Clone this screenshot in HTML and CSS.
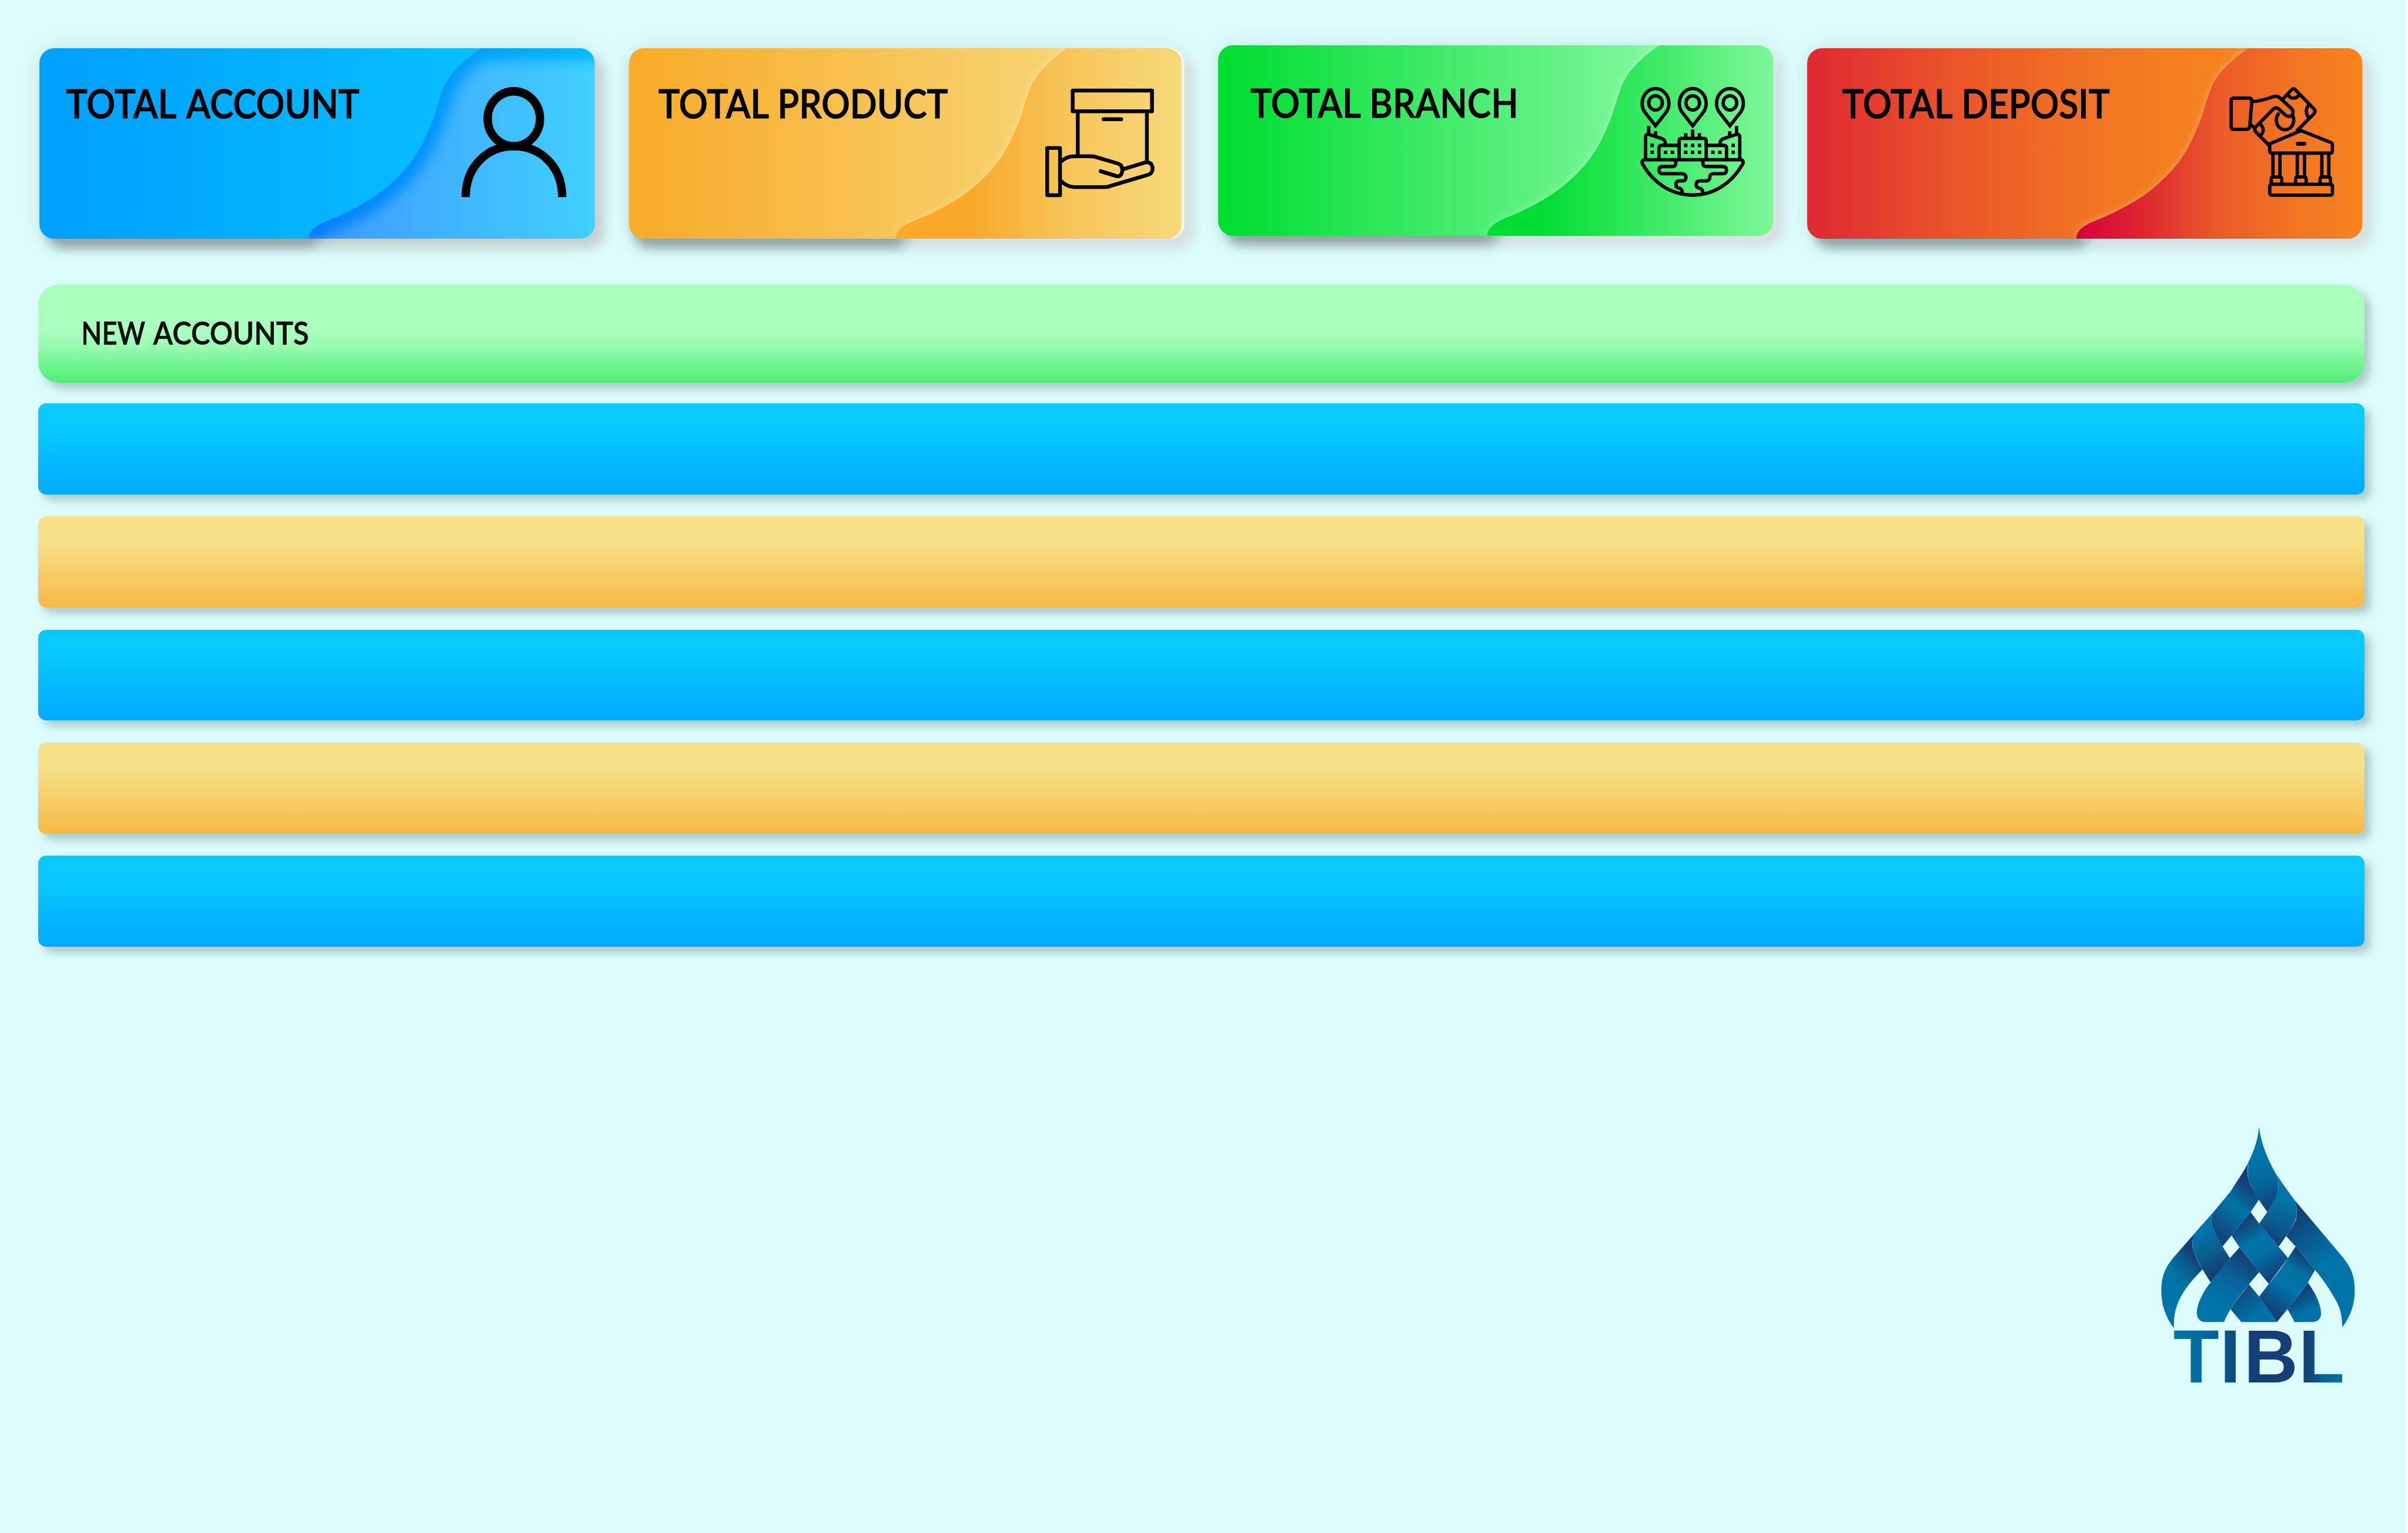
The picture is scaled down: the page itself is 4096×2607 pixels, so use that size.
FILE: index.html
```html
<!DOCTYPE html>
<html lang="en">
<head>
<meta charset="utf-8">
<title>TIBL Dashboard</title>
<link rel="stylesheet" href="styles.css">
</head>
<body>
<svg class="defs" aria-hidden="true">
  <defs>
    <path id="wave" d="M778 0 C742 26 722 48 713 70 C702 98 697 125 686 146 C670 185 650 214 612 246 C588 266 562 280 537 292 C508 306 476 312 475 336.3 H954 A26 26 0 0 0 980 310.300 V26 A26 26 0 0 0 954 0 Z"/>
    <path id="base" d="M26 0 H778 C742 26 722 48 713 70 C702 98 697 125 686 146 C670 185 650 214 612 246 C588 266 562 280 537 292 C508 306 476 312 475 336.3 H26 A26 26 0 0 1 0 310.300 V26 A26 26 0 0 1 26 0 Z"/>
    <clipPath id="waveClip"><use href="#wave"/></clipPath>
    <filter id="soft" x="-20%" y="-40%" width="140%" height="180%"><feGaussianBlur stdDeviation="10"/></filter>
    <filter id="softWide" x="-20%" y="-40%" width="140%" height="180%"><feGaussianBlur stdDeviation="19"/></filter>
    <filter id="glow" x="-20%" y="-40%" width="140%" height="180%"><feGaussianBlur stdDeviation="7"/></filter>
    <filter id="inner" x="-20%" y="-40%" width="140%" height="180%"><feGaussianBlur stdDeviation="11"/></filter>
    <linearGradient id="blueA" gradientUnits="userSpaceOnUse" x1="0" x2="778"><stop offset="0.05" stop-color="#00a0ff"/><stop offset="1" stop-color="#06c0ff"/></linearGradient>
    <linearGradient id="blueB" gradientUnits="userSpaceOnUse" x1="475" x2="980"><stop offset="0" stop-color="#3f98ff"/><stop offset="0.5" stop-color="#40b4ff"/><stop offset="1" stop-color="#40d0ff"/></linearGradient>
    <linearGradient id="blueC" gradientUnits="userSpaceOnUse" x1="475" x2="980"><stop offset="0" stop-color="#007cff"/><stop offset="1" stop-color="#00b8ff"/></linearGradient>
    <linearGradient id="goldA" gradientUnits="userSpaceOnUse" x1="0" x2="778"><stop offset="0.05" stop-color="#f8ac2b"/><stop offset="1" stop-color="#f6d676"/></linearGradient>
    <linearGradient id="goldB" gradientUnits="userSpaceOnUse" x1="475" x2="980"><stop offset="0.25" stop-color="#f9a828"/><stop offset="0.6" stop-color="#f7c559"/><stop offset="1" stop-color="#f6d97b"/></linearGradient>
    <linearGradient id="greenA" gradientUnits="userSpaceOnUse" x1="0" x2="778"><stop offset="0.03" stop-color="#00de33"/><stop offset="1" stop-color="#83f8a0"/></linearGradient>
    <linearGradient id="greenB" gradientUnits="userSpaceOnUse" x1="475" x2="980"><stop offset="0.2" stop-color="#00de33"/><stop offset="1" stop-color="#7ff79a"/></linearGradient>
    <linearGradient id="redA" gradientUnits="userSpaceOnUse" x1="0" x2="778"><stop offset="0.02" stop-color="#df2a32"/><stop offset="0.3" stop-color="#e9512a"/><stop offset="0.6" stop-color="#f07024"/><stop offset="0.8" stop-color="#f47d20"/><stop offset="1" stop-color="#f5851f"/></linearGradient>
    <linearGradient id="redB" gradientUnits="userSpaceOnUse" x1="475" x2="980"><stop offset="0" stop-color="#d6003b"/><stop offset="0.3" stop-color="#e0332f"/><stop offset="0.48" stop-color="#ea5829"/><stop offset="0.75" stop-color="#f27323"/><stop offset="1" stop-color="#f6841f"/></linearGradient>
  </defs>
</svg>

<main class="page">
  <section class="cards">
    <article class="card">
      <svg class="card-art" viewBox="0 0 980 336.300">
        <rect class="ambient" width="980" height="336" rx="26"/>
        <use href="#wave" class="shade-gray" x="17" y="17"/>
        <use href="#base" class="shade-dark" x="14" y="17"/>
        <use href="#base" fill="url(#blueA)"/>
        <use href="#wave" fill="url(#blueB)"/>
        <g clip-path="url(#waveClip)"><path class="inset" stroke="url(#blueC)" d="M1010 0 H778 C742 26 722 48 713 70 C702 98 697 125 686 146 C670 185 650 214 612 246 C588 266 562 280 537 292 C508 306 476 312 475 336"/></g>
        <text class="label" y="123"><tspan x="47" textLength="195" lengthAdjust="spacingAndGlyphs">TOTAL</tspan> <tspan x="259" textLength="306" lengthAdjust="spacingAndGlyphs">ACCOUNT</tspan></text>
        <g class="icon person"><ellipse cx="837.300" cy="124.500" rx="46.200" ry="48.500"/><path d="M752.300 262.700 C752.300 209 790 173 837.500 173 S922.700 209 922.700 262.700"/></g>
      </svg>
    </article>
    <article class="card">
      <svg class="card-art" viewBox="0 0 980 336.300">
        <rect class="ambient" width="980" height="336" rx="26"/>
        <use href="#wave" class="shade-light" x="17" y="17"/>
        <use href="#base" class="shade-dark" x="9" y="17"/>
        <rect x="500" width="480" height="336.300" rx="26" fill="#fdf6e2"/>
        <use href="#base" fill="url(#goldA)"/>
        <use href="#wave" class="halo" x="-5"/>
        <use href="#wave" fill="url(#goldB)" x="-5"/>
        <text class="label" y="123"><tspan x="52" textLength="195" lengthAdjust="spacingAndGlyphs">TOTAL</tspan> <tspan x="262" textLength="301" lengthAdjust="spacingAndGlyphs">PRODUCT</tspan></text>
        <g class="icon" stroke-width="20" transform="translate(720 45) scale(.33333)">
          <path stroke-linejoin="round" d="M189 89 H609 V199 H189 Z M54 393 H122 V643 H54 Z"/>
          <path d="M216 199 V437 M582 199 V468"/>
          <path stroke-linecap="round" d="M353 241 H446"/>
          <path d="M126 467 Q155 437 195 437 H288 Q304 437 318 443 L430 476 Q452 485 452 511 Q448 545 425 543 L337 516"/>
          <path stroke-linecap="round" d="M337 516 L410 539"/>
          <path d="M457 505 L572 470 Q605 463 612 495 Q614 522 595 533 L380 597 Q372 600 360 600 H195 Q155 598 126 566"/>
        </g>
      </svg>
    </article>
    <article class="card card-raised">
      <svg class="card-art" viewBox="0 0 980 336.300">
        <rect class="ambient" width="980" height="336" rx="26"/>
        <use href="#wave" class="shade-light" x="17" y="17"/>
        <use href="#base" class="shade-dark" x="14" y="17"/>
        <use href="#base" fill="url(#greenA)"/>
        <use href="#wave" class="halo"/>
        <use href="#wave" fill="url(#greenB)"/>
        <text class="label" y="128"><tspan x="57" textLength="195" lengthAdjust="spacingAndGlyphs">TOTAL</tspan> <tspan x="267" textLength="263" lengthAdjust="spacingAndGlyphs">BRANCH</tspan></text>
        <g class="icon" stroke-width="18" transform="translate(720 50) scale(.33333)">
          <g id="pin"><path d="M156 276 L103 209 C90 192 85 178 85 158 A71 79 0 0 1 227 158 C227 178 222 192 209 209 Z"/><ellipse cx="156" cy="155" rx="36" ry="38"/></g>
          <use href="#pin" x="197"/>
          <use href="#pin" x="394"/>
          <path d="M120 277 V322 M156 305 V330 M316 315 V342 M353 296 V342 M388 315 V342 M549 305 V330 M585 277 V322"/>
          <path d="M103 455 V338 Q103 318 122 322 L190 344 Q208 350 208 373 M174 455 V395 Q174 380 188 380 H281 M281 455 V355 Q281 343 293 343 H411 Q424 343 424 355 V455 M424 380 H518 Q532 380 532 395 V455 M602 455 V338 Q602 318 584 322 L515 345 Q497 351 497 373 M90 456 H615"/>
          <path d="M97 456 Q80 460 87 478 C145 580 240 643 353 643 C465 643 560 580 618 478 Q625 460 608 456"/>
          <path d="M263 460 V475 Q263 492 245 492 H195 Q174 492 174 511 Q174 530 195 530 H295 Q317 530 317 550 Q317 568 298 568 H282 Q264 568 264 588 Q264 605 282 606 Q298 610 298 635 M407 460 V475 Q407 492 425 492 H512 Q532 492 532 511 Q532 530 512 530 H462 Q443 532 443 550 Q443 568 424 568 H392 Q371 568 371 588 Q372 604 388 606 Q407 610 407 635"/>
          <path stroke-dasharray="18 18.500" d="M307 380 H398 M307 417 H398 M200 417 H255 M451 417 H506"/>
          <path d="M129 380 H147 M129 417 H147 M558 380 H576 M558 417 H576"/>
        </g>
      </svg>
    </article>
    <article class="card">
      <svg class="card-art" viewBox="0 0 980 336.300">
        <rect class="ambient" width="980" height="336" rx="26"/>
        <use href="#wave" class="shade-light" x="17" y="17"/>
        <use href="#base" class="shade-dark" x="14" y="17"/>
        <use href="#base" fill="url(#redA)"/>
        <use href="#wave" class="halo"/>
        <use href="#wave" fill="url(#redB)"/>
        <text class="label" y="123"><tspan x="62" textLength="195" lengthAdjust="spacingAndGlyphs">TOTAL</tspan> <tspan x="272" textLength="262" lengthAdjust="spacingAndGlyphs">DEPOSIT</tspan></text>
        <g class="icon" stroke-width="18" transform="translate(720 45) scale(.33333)">
          <path d="M100 129 H180 Q194 129 194 145 L184 275 Q182 294 165 294 H97 Q85 294 85 280 V142 Q85 129 100 129 Z"/>
          <path d="M198 147 C245 145 275 133 310 121 Q330 115 345 130 L403 183 Q412 192 412 205 Q412 226 390 226 Q378 225 370 217 L337 186 Q322 175 308 187 L212 285 Q206 297 215 308 L290 384 M186 267 L212 289"/>
          <path d="M357 135 L405 85 Q415 74 425 85 L525 188 Q533 199 525 210 L430 305"/>
          <path d="M383 108 Q395 129 415 129 Q435 129 447 108 M497 162 Q469 200 498 236 M236 264 Q272 296 238 330"/>
          <path d="M340 207 A46 51 0 1 0 411 222"/>
          <path d="M289 371 L455 301 L613 364 Q621 368 621 378 V408 Q621 420 610 420 H300 Q289 420 289 408 Z"/>
          <path stroke-linecap="round" stroke-width="20" d="M437 371 H473"/>
          <path d="M306 420 V546 M343 420 V546 M435 420 V546 M473 420 V546 M565 420 V546 M602 420 V546"/>
          <path d="M297 583 V560 Q297 546 310 546 H340 Q353 546 353 560 V583 M426 583 V560 Q426 546 439 546 H469 Q482 546 482 560 V583 M556 583 V560 Q556 546 569 546 H598 Q611 546 611 560 V583"/>
          <rect x="289" y="585" width="332" height="58" rx="10"/>
        </g>
      </svg>
    </article>
  </section>

  <section class="list">
    <header class="list-head">
      <svg class="list-title" viewBox="0 0 420 60"><text class="list-label" y="49"><tspan x="-4" textLength="113" lengthAdjust="spacingAndGlyphs">NEW</tspan> <tspan x="123" textLength="275" lengthAdjust="spacingAndGlyphs">ACCOUNTS</tspan></text></svg>
    </header>
    <div class="row row-blue"></div>
    <div class="row row-gold"></div>
    <div class="row row-blue"></div>
    <div class="row row-gold"></div>
    <div class="row row-blue"></div>
  </section>

  <footer class="brand">
    <svg class="logo" viewBox="0 0 1260 1500">
      <defs>
        <linearGradient id="lA" gradientUnits="userSpaceOnUse" x1="610" y1="250" x2="700" y2="480"><stop offset="0" stop-color="#0074a8"/><stop offset="0.5" stop-color="#066496"/><stop offset="1" stop-color="#133f76"/></linearGradient>
        <linearGradient id="lB" gradientUnits="userSpaceOnUse" x1="585" y1="380" x2="405" y2="620"><stop offset="0" stop-color="#133f76"/><stop offset="0.42" stop-color="#0074a8"/><stop offset="0.6" stop-color="#066899"/><stop offset="1" stop-color="#114780"/></linearGradient>
        <linearGradient id="lC" gradientUnits="userSpaceOnUse" x1="770" y1="440" x2="690" y2="680"><stop offset="0" stop-color="#0074a8"/><stop offset="0.5" stop-color="#0a5f92"/><stop offset="1" stop-color="#133f76"/></linearGradient>
        <linearGradient id="lD" gradientUnits="userSpaceOnUse" x1="810" y1="530" x2="980" y2="770"><stop offset="0" stop-color="#133f76"/><stop offset="0.5" stop-color="#0a5b8e"/><stop offset="1" stop-color="#0074a8"/></linearGradient>
        <linearGradient id="lE" gradientUnits="userSpaceOnUse" x1="310" y1="620" x2="410" y2="820"><stop offset="0" stop-color="#0074a8"/><stop offset="0.5" stop-color="#09608f"/><stop offset="1" stop-color="#133f76"/></linearGradient>
        <linearGradient id="lF" gradientUnits="userSpaceOnUse" x1="280" y1="740" x2="160" y2="840"><stop offset="0" stop-color="#133f76"/><stop offset="0.5" stop-color="#09628f"/><stop offset="1" stop-color="#0074a8"/></linearGradient>
        <linearGradient id="lG" gradientUnits="userSpaceOnUse" x1="530" y1="560" x2="710" y2="850"><stop offset="0" stop-color="#133f76"/><stop offset="0.35" stop-color="#0074a8"/><stop offset="0.6" stop-color="#036fa2"/><stop offset="1" stop-color="#133f76"/></linearGradient>
        <linearGradient id="lH" gradientUnits="userSpaceOnUse" x1="550" y1="740" x2="400" y2="980"><stop offset="0" stop-color="#133f76"/><stop offset="0.5" stop-color="#08639a"/><stop offset="1" stop-color="#0074a8"/></linearGradient>
        <linearGradient id="lI" gradientUnits="userSpaceOnUse" x1="865" y1="740" x2="670" y2="1030"><stop offset="0" stop-color="#133f76"/><stop offset="0.25" stop-color="#0470a2"/><stop offset="0.55" stop-color="#0074a8"/><stop offset="1" stop-color="#133f76"/></linearGradient>
        <linearGradient id="lJ" gradientUnits="userSpaceOnUse" x1="510" y1="930" x2="600" y2="1060"><stop offset="0" stop-color="#124a80"/><stop offset="1" stop-color="#0072a6"/></linearGradient>
        <linearGradient id="lK" gradientUnits="userSpaceOnUse" x1="835" y1="930" x2="885" y2="1030"><stop offset="0" stop-color="#133f76"/><stop offset="1" stop-color="#0072a6"/></linearGradient>
        <linearGradient id="lT" gradientUnits="userSpaceOnUse" x1="200" y1="1270" x2="1060" y2="1270"><stop offset="0" stop-color="#0073a7"/><stop offset="0.17" stop-color="#04699c"/><stop offset="0.4" stop-color="#133f76"/><stop offset="0.77" stop-color="#133f76"/><stop offset="0.9" stop-color="#066598"/><stop offset="1" stop-color="#0072a6"/></linearGradient>
      </defs>
      <path fill="url(#lD)" d="M810 445 L1060 742 C1110 800 1128 850 1128 925 C1128 1000 1105 1060 1062 1118 C1062 1040 1045 1000 1010 945 C985 900 955 860 918 815 L815 690 L765 635 C790 598 808 570 817 548 C824 520 824 480 810 445 Z"/>
      <path fill="url(#lF)" d="M283 618 L172 745 C125 800 105 845 104 925 C104 1000 125 1060 171 1124 C170 1045 180 1010 208 955 C235 905 275 860 322 812 C300 775 285 745 275 715 C265 690 265 650 283 618 Z"/>
      <path fill="url(#lE)" d="M380 508 L285 615 C265 640 265 690 275 715 C285 745 305 780 322 812 L365 880 L467 752 L428 690 L385 612 C366 570 365 540 380 508 Z"/>
      <path fill="url(#lB)" d="M563 248 C535 305 500 350 470 400 L380 508 C365 535 368 575 380 600 C392 630 410 660 428 690 L476 632 L577 508 L620 443 L580 375 C560 335 556 290 563 248 Z"/>
      <path fill="url(#lC)" d="M718 315 C750 365 780 405 810 445 C822 475 825 520 815 548 C805 575 785 605 765 635 L725 692 L622 570 L665 507 L700 445 C725 405 730 370 718 315 Z"/>
      <path fill="url(#lA)" d="M622 58 C632 150 670 235 718 318 C730 370 722 410 705 440 L665 507 L620 443 C605 420 592 400 580 375 C560 335 558 295 565 243 C598 180 615 120 622 58 Z"/>
      <path fill="url(#lG)" d="M577 508 L622 570 L725 692 L775 752 L673 888 L622 826 L518 695 L476 632 Z"/>
      <path fill="url(#lJ)" d="M568 890 L622 956 L716 1090 H527 L470 1022 C500 975 530 940 568 890 Z"/>
      <path fill="url(#lH)" d="M518 695 L622 826 L568 890 C530 935 500 975 470 1022 C458 1045 445 1065 436 1090 H335 C305 1088 290 1065 292 1035 C296 985 325 930 365 880 C395 840 430 795 467 752 Z"/>
      <path fill="url(#lK)" d="M880 880 C920 940 945 985 950 1040 C952 1068 935 1088 910 1090 H808 C798 1065 785 1045 772 1022 C810 975 850 925 880 880 Z"/>
      <path fill="url(#lI)" d="M815 690 L918 815 L880 880 C850 925 810 975 772 1022 L716 1090 L622 956 L673 888 C710 845 745 800 775 752 Z"/>
      <text class="logo-text" y="1410" x="167 414 541 831" fill="url(#lT)">TIBL</text>
    </svg>
  </footer>
</main>
</body>
</html>
```
FILE: styles.css
```css
/* 1rem is ten design units on the 4250-unit-wide board */
html { font-size: 0.2352941vw; }
* { box-sizing: border-box; }
body {
  margin: 0;
  background: #ddfdfc;
  color: #000;
  font-family: Lato, "Liberation Sans", sans-serif;
}
.defs { position: absolute; width: 0; height: 0; }
.page {
  display: flex;
  flex-direction: column;
  height: 100vh;
  overflow: hidden;
  border-right: 0.5rem solid #fff;
}
.cards {
  display: flex;
  gap: 6rem;
  padding: 8.5rem 0 0 7rem;
}
.card { flex: none; width: 98rem; height: 33.63rem; }
.card-raised { margin-top: -0.5rem; margin-bottom: 0.5rem; }
.card-art { display: block; width: 100%; height: 100%; overflow: visible; }
.ambient { fill: #5f8f9a; opacity: 0.2; filter: url(#softWide); }
.shade-gray { fill: #c6d0d0; filter: url(#soft); }
.shade-light { fill: #d6dfe0; filter: url(#soft); }
.shade-dark { fill: #7f9090; opacity: 0.8; filter: url(#soft); }
.halo { fill: #fff; opacity: 0.3; filter: url(#glow); }
.inset { fill: none; stroke-width: 44; filter: url(#inner); }
.label { font-size: 69px; font-weight: 600; stroke: #000; stroke-width: 1px; }
.icon { fill: none; stroke: #000; }
.person { stroke-width: 14.800; }

.list {
  display: flex;
  flex-direction: column;
  gap: 3.89rem;
  padding: 8.05rem 7.3rem 0 6.75rem;
}
.list-head {
  display: flex;
  align-items: center;
  height: 17.4rem;
  margin-bottom: -0.3rem;
  padding-left: 8rem;
  border-radius: 3.6rem;
  background: linear-gradient(#aaffbd 0 48%, #96fbae 62%, #50ee76);
  box-shadow: 1rem 1rem 1.6rem rgba(60, 80, 85, 0.3);
}
.list-title { display: block; width: 42rem; height: 6rem; overflow: visible; }
.list-label {
  font-size: 55px;
  font-weight: 600;
  stroke: #000;
  stroke-width: 0.600px;
  text-shadow: 6px 9px 14px rgba(175, 255, 195, 0.9);
}
.row {
  height: 16.07rem;
  border-radius: 1.4rem;
  box-shadow: 1rem 1rem 1.6rem rgba(60, 80, 85, 0.3);
}
.row-blue { background: linear-gradient(#09caff 0 28%, #02b8ff 66%, #00abff); }
.row-gold { background: linear-gradient(#f6e188 0 28%, #f6c65c 75%, #f7b842); }

.brand {
  display: flex;
  justify-content: flex-end;
  padding: 29.9rem 4.6rem 0 0;
}
.logo { display: block; width: 42rem; height: 50rem; }
.logo-text { font-family: "Liberation Sans", Arial, sans-serif; font-size: 397px; font-weight: 700; }
```
